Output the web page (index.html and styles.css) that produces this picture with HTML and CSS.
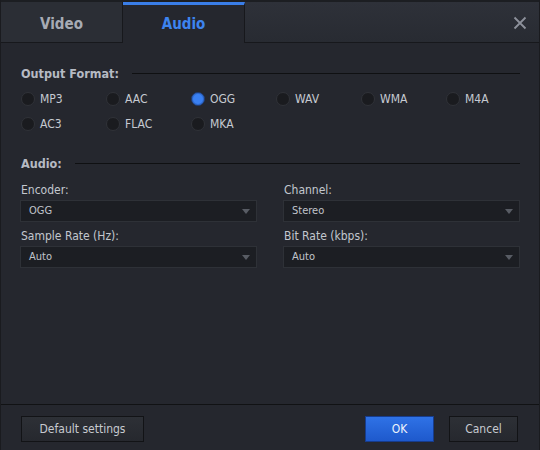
FILE: index.html
```html
<!DOCTYPE html>
<html>
<head>
<meta charset="utf-8">
<link rel="stylesheet" href="styles.css">
</head>
<body>
<div class="window">
  <div class="tabbar">
    <div class="tab">Video</div>
    <div class="tab active">Audio</div>
    <div class="tab-rest">
      <svg class="close" width="14" height="14" viewBox="0 0 14 14"><path d="M1.5 1.5 L12.5 12.5 M12.5 1.5 L1.5 12.5" stroke="#8d919b" stroke-width="1.8" fill="none"/></svg>
    </div>
  </div>
  <div class="content">
    <div class="heading first"><span>Output Format:</span><div class="rule"></div></div>
    <div class="radios">
      <div class="radio"><span class="dot"></span>MP3</div>
      <div class="radio"><span class="dot"></span>AAC</div>
      <div class="radio"><span class="dot on"></span>OGG</div>
      <div class="radio"><span class="dot"></span>WAV</div>
      <div class="radio"><span class="dot"></span>WMA</div>
      <div class="radio"><span class="dot"></span>M4A</div>
      <div class="radio"><span class="dot"></span>AC3</div>
      <div class="radio"><span class="dot"></span>FLAC</div>
      <div class="radio"><span class="dot"></span>MKA</div>
    </div>
    <div class="heading second"><span>Audio:</span><div class="rule"></div></div>
    <div class="fields">
      <div class="field"><div class="label">Encoder:</div><div class="select">OGG<span class="arrow"></span></div></div>
      <div class="field"><div class="label">Channel:</div><div class="select">Stereo<span class="arrow"></span></div></div>
      <div class="field"><div class="label">Sample Rate (Hz):</div><div class="select">Auto<span class="arrow"></span></div></div>
      <div class="field"><div class="label">Bit Rate (kbps):</div><div class="select">Auto<span class="arrow"></span></div></div>
    </div>
  </div>
  <div class="footer">
    <div class="btn default">Default settings</div>
    <div class="spacer"></div>
    <div class="btn ok">OK</div>
    <div class="btn cancel">Cancel</div>
  </div>
</div>
</body>
</html>
```
FILE: styles.css
```css
* { box-sizing: border-box; }
html, body { margin: 0; padding: 0; }
body {
  width: 540px; height: 450px; overflow: hidden;
  background: #25272e;
  font-family: "DejaVu Sans Condensed", "DejaVu Sans", sans-serif;
  font-size: 12px;
  color: #c3c7ce;
}
.window {
  width: 540px; height: 450px;
  display: flex; flex-direction: column;
  border-left: 1px solid #1a1b1f;
  border-right: 1px solid #1a1b1f;
  background: #25272e;
}
.tabbar {
  height: 43px;
  display: flex;
  border-top: 2px solid #1c1e22;
  flex: none;
}
.tab {
  width: 122px;
  display: flex; align-items: center; justify-content: center;
  font-family: "DejaVu Sans Condensed", "DejaVu Sans", sans-serif;
  font-weight: bold; font-size: 15px;
  color: #a7abb4;
  background: #2b2e35;
  border-right: 1px solid #17181c;
  border-bottom: 1px solid #17181c;
  padding-top: 3px;
}
.tab.active {
  background: #25272e;
  color: #3d84ef;
  border-top: 3px solid #3a7ee8;
  border-bottom: none;
  padding-top: 0;
  padding-bottom: 0;
}
.tab-rest {
  flex: 1;
  display: flex; align-items: center; justify-content: flex-end;
  padding-right: 12px;
  background: linear-gradient(#2e3139, #282b32);
  border-bottom: 1px solid #17181c;
}
.close { display: block; margin-top: 1px; }
.content {
  flex: 1;
  padding: 0 19px 0 19px;
}
.heading {
  display: flex; align-items: center;
  height: 16px;
  font-weight: bold; font-size: 12.5px;
  color: #b6bac3;
  padding-left: 1px;
}
.heading.first { margin-top: 22px; }
.heading.second { margin-top: 24px; }
.heading .rule {
  flex: 1; height: 1px; background: #0f1012;
  margin-left: 13px;
}
.radios {
  display: grid;
  grid-template-columns: repeat(6, 85px);
  row-gap: 11px;
  margin-top: 11px;
  padding-left: 1px;
}
.radio {
  display: flex; align-items: center;
  height: 14px;
  color: #c6cad1;
}
.dot {
  width: 14px; height: 14px; border-radius: 50%;
  background: #1a1b1f;
  border: 1px solid #303238;
  margin-right: 5px;
  flex: none;
}
.dot.on {
  background: #3a80f2;
  border: 1px solid #1e3a70;
  box-shadow: inset 0 0 0 1px #2f6ad0;
}
.fields {
  display: grid;
  grid-template-columns: 237px 237px;
  column-gap: 26px;
  row-gap: 7px;
  margin-top: 12px;
}
.label {
  height: 14px; line-height: 14px;
  margin-bottom: 3px;
  padding-left: 1px;
  color: #c3c7ce;
}
.select {
  position: relative;
  height: 22px;
  background: #1c1e23;
  border: 1px solid #2e3137;
  padding-left: 8px;
  line-height: 20px;
  font-size: 11px;
  color: #c0c4cb;
}
.arrow {
  position: absolute;
  right: 6px; top: 8px;
  width: 0; height: 0;
  border-left: 4px solid transparent;
  border-right: 4px solid transparent;
  border-top: 5px solid #585c64;
}
.footer {
  flex: none;
  height: 46px;
  border-top: 1px solid #111214;
  display: flex; align-items: flex-start;
  padding: 11px 21px 0 20px;
}
.spacer { flex: 1; }
.btn {
  height: 26px;
  display: flex; align-items: center; justify-content: center;
  font-size: 12px;
  color: #c7cad0;
  border: 1px solid #121316;
  background: linear-gradient(#2d3036, #26282e);
}
.btn.default { width: 123px; }
.btn.ok {
  width: 69px;
  color: #eef3fb;
  background: linear-gradient(#2f72e6, #1e59cc);
  border: 1px solid #173c8c;
}
.btn.cancel { width: 69px; margin-left: 15px; }
```
